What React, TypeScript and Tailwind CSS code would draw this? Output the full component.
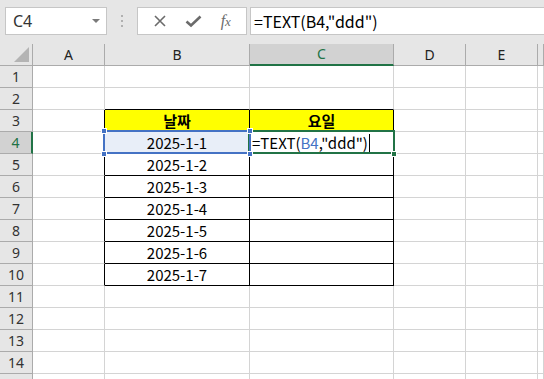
import React from "react";

const colLetters = ["A", "B", "C", "D", "E", ""];
const dates: Record<number, string> = {
  4: "2025-1-1",
  5: "2025-1-2",
  6: "2025-1-3",
  7: "2025-1-4",
  8: "2025-1-5",
  9: "2025-1-6",
  10: "2025-1-7",
};

function cellBorder(r: number, c: number): string {
  const inTable = r >= 3 && r <= 10;
  if (c === 0 && inTable) return "border-r border-b border-r-black border-b-[#d4d4d4]";
  if ((c === 1 || c === 2) && inTable) return "border-r border-b border-black";
  if ((c === 1 || c === 2) && r === 2) return "border-r border-b border-r-[#d4d4d4] border-b-black";
  return "border-r border-b border-[#d4d4d4]";
}

function Handle({ cls }: { cls: string }) {
  return <div className={"absolute w-[6px] h-[6px] border border-white " + cls} />;
}

function Cell({ r, c }: { r: number; c: number }) {
  const base =
    "relative flex items-center overflow-visible text-[15px] leading-none text-black " +
    cellBorder(r, c);
  if (r === 3 && (c === 1 || c === 2)) {
    return (
      <div className={base + " justify-center bg-[#ffff00] font-bold"}>
        {c === 1 ? "날짜" : "요일"}
      </div>
    );
  }
  if (c === 1 && dates[r]) {
    if (r === 4) {
      return (
        <div className={base + " justify-center bg-[#e8eef8]"}>
          <span>{dates[r]}</span>
          <div className="absolute left-[-2px] top-[-2px] right-[-2px] bottom-[-1px] border-2 border-[#4472c4] z-20 pointer-events-none" />
          <Handle cls="left-[-4px] top-[-4px] bg-[#4472c4] z-30" />
          <Handle cls="right-[-4px] top-[-4px] bg-[#4472c4] z-30" />
          <Handle cls="left-[-4px] bottom-[-4px] bg-[#4472c4] z-30" />
          <Handle cls="right-[-4px] bottom-[-4px] bg-[#4472c4] z-30" />
        </div>
      );
    }
    return <div className={base + " justify-center"}>{dates[r]}</div>;
  }
  if (r === 4 && c === 2) {
    return (
      <div className={base + " justify-start pl-[2px] z-10"}>
        <span className="whitespace-nowrap">
          =TEXT(<span className="text-[#4472c4]">B4</span>,"ddd")
        </span>
        <span className="inline-block w-px h-[18px] bg-black ml-[1px]" />
        <div className="absolute left-[-2px] top-[-2px] right-[-2px] bottom-[-1px] border-2 border-[#217346] pointer-events-none" />
        <div className="absolute right-[-4px] bottom-[-4px] w-[6px] h-[6px] bg-[#217346] border border-white" />
      </div>
    );
  }
  return <div className={base} />;
}

function XIcon() {
  return (
    <svg width="14" height="14" viewBox="0 0 14 14">
      <path d="M2 2 L12 12 M12 2 L2 12" stroke="#6b6b6b" strokeWidth="1.6" fill="none" />
    </svg>
  );
}

function CheckIcon() {
  return (
    <svg width="17" height="14" viewBox="0 0 17 14">
      <path d="M1.5 7.5 L6 11.5 L15.5 2.5" stroke="#6b6b6b" strokeWidth="2.6" fill="none" />
    </svg>
  );
}

export default function App() {
  const rows = Array.from({ length: 15 }, (_, i) => i + 1);
  return (
    <div
      className="w-[544px] h-[379px] overflow-hidden bg-[#e6e6e6] flex flex-col"
      style={{ fontFamily: '"Noto Sans", "Noto Sans CJK KR", sans-serif' }}
    >
      {/* Formula bar */}
      <div className="h-[44px] flex items-start pt-[7px] pl-[5px] shrink-0">
        <div className="w-[102px] h-[28px] bg-white border border-[#c6c6c6] flex items-center justify-between pl-[7px] pr-[6px]">
          <span className="text-[16px] text-[#333] leading-none">C4</span>
          <div className="w-0 h-0 border-l-[4px] border-r-[4px] border-t-[4px] border-l-transparent border-r-transparent border-t-[#7a7a7a]" />
        </div>
        <div className="w-[30px] h-[28px] flex flex-col items-center justify-center gap-[3px]">
          <div className="w-[2px] h-[2px] bg-[#b0b0b0]" />
          <div className="w-[2px] h-[2px] bg-[#b0b0b0]" />
          <div className="w-[2px] h-[2px] bg-[#b0b0b0]" />
        </div>
        <div className="w-[110px] h-[28px] bg-white border border-[#c6c6c6] flex items-center justify-around px-[6px]">
          <XIcon />
          <CheckIcon />
          <span
            className="italic text-[16px] text-[#6b6b6b] leading-none"
            style={{ fontFamily: '"Liberation Serif", serif' }}
          >
            f<span className="text-[13px]">x</span>
          </span>
        </div>
        <div className="ml-[3px] flex-1 h-[28px] bg-white border border-[#c6c6c6] border-r-0 flex items-center pl-[3px]">
          <span
            className="text-[16px] text-black leading-none whitespace-nowrap"
            style={{ fontFamily: '"Noto Sans CJK KR", sans-serif' }}
          >
            =TEXT(B4,"ddd")
          </span>
        </div>
      </div>

      {/* Sheet grid */}
      <div
        className="grid grid-cols-[33px_72px_145px_144px_72px_72px_1fr] auto-rows-[22px] bg-white"
        style={{ fontFamily: '"Noto Sans CJK KR", sans-serif' }}
      >
        {/* header row */}
        <div className="relative bg-[#e6e6e6] border-r border-b border-[#ababab]">
          <svg className="absolute right-[3px] bottom-[3px]" width="15" height="15" viewBox="0 0 15 15">
            <polygon points="15,0 15,15 0,15" fill="#b4b4b4" />
          </svg>
        </div>
        {colLetters.map((l, i) =>
          i === 2 ? (
            <div
              key={l + i}
              className="flex items-center justify-center bg-[#d2d2d2] border-r border-[#ababab] border-b-2 border-b-[#217346] text-[14px] text-[#217346] leading-none"
              style={{ fontFamily: '"Noto Sans", sans-serif' }}
            >
              {l}
            </div>
          ) : (
            <div
              key={l + i}
              className="flex items-center justify-center bg-[#e6e6e6] border-r border-b border-[#ababab] text-[14px] text-[#222] leading-none"
              style={{ fontFamily: '"Noto Sans", sans-serif' }}
            >
              {l}
            </div>
          )
        )}
        {rows.map((r) => (
          <React.Fragment key={r}>
            {r === 4 ? (
              <div
                className="flex items-center justify-center bg-[#d2d2d2] border-r-2 border-r-[#217346] border-b border-b-[#ababab] text-[14px] text-[#217346] leading-none"
                style={{ fontFamily: '"Noto Sans", sans-serif' }}
              >
                {r}
              </div>
            ) : (
              <div
                className="flex items-center justify-center bg-[#e6e6e6] border-r border-b border-[#ababab] text-[14px] text-[#333] leading-none"
                style={{ fontFamily: '"Noto Sans", sans-serif' }}
              >
                {r <= 14 ? r : ""}
              </div>
            )}
            {colLetters.map((_, c) => (
              <Cell key={c} r={r} c={c} />
            ))}
          </React.Fragment>
        ))}
      </div>
    </div>
  );
}
